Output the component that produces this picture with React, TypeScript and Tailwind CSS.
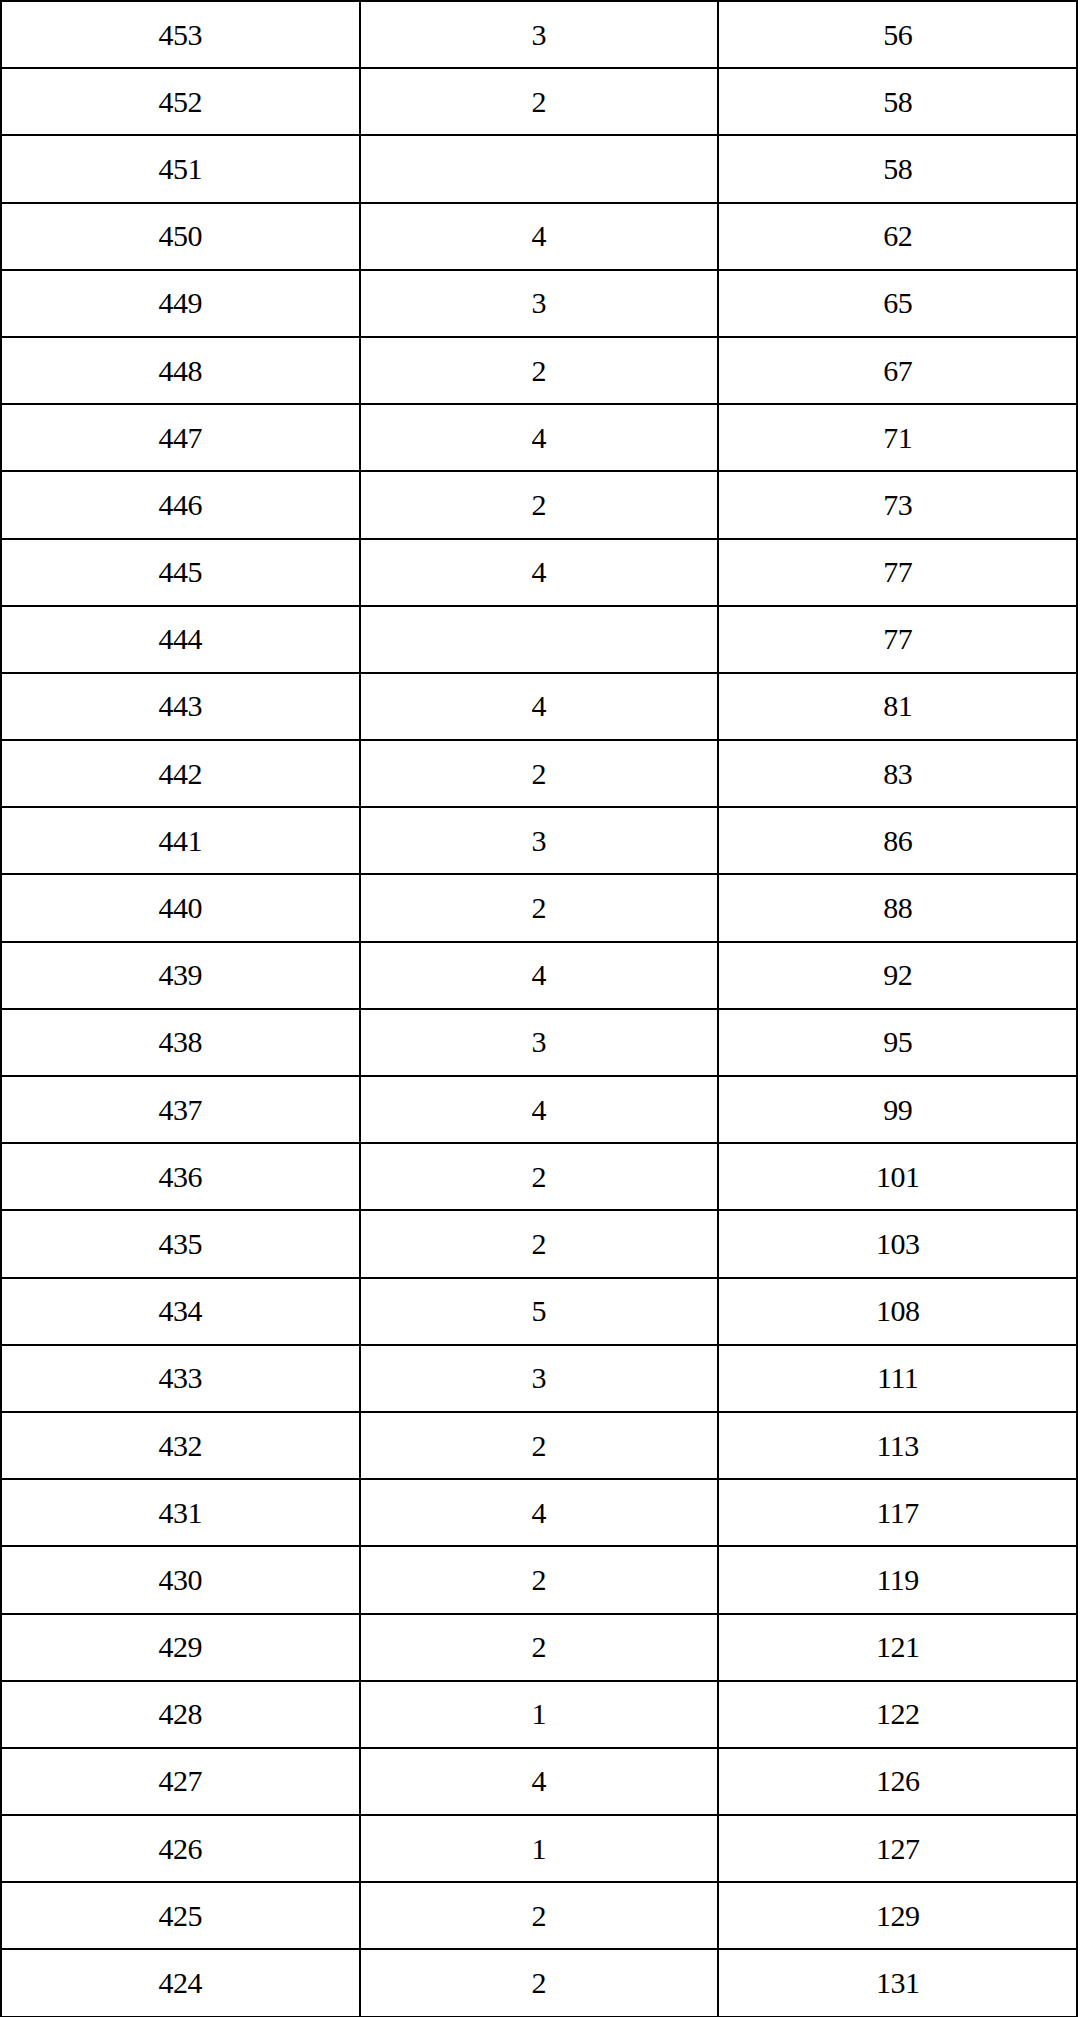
const rows: [number, number | null, number][] = [
  [453, 3, 56],
  [452, 2, 58],
  [451, null, 58],
  [450, 4, 62],
  [449, 3, 65],
  [448, 2, 67],
  [447, 4, 71],
  [446, 2, 73],
  [445, 4, 77],
  [444, null, 77],
  [443, 4, 81],
  [442, 2, 83],
  [441, 3, 86],
  [440, 2, 88],
  [439, 4, 92],
  [438, 3, 95],
  [437, 4, 99],
  [436, 2, 101],
  [435, 2, 103],
  [434, 5, 108],
  [433, 3, 111],
  [432, 2, 113],
  [431, 4, 117],
  [430, 2, 119],
  [429, 2, 121],
  [428, 1, 122],
  [427, 4, 126],
  [426, 1, 127],
  [425, 2, 129],
  [424, 2, 131],
];

export default function App() {
  return (
    <div className="min-h-[2017px] w-[1080px] bg-white">
      <table
        className="w-[1078px] table-fixed border-collapse text-[30px] leading-none text-black"
        style={{ fontFamily: '"Liberation Serif", "Noto Sans CJK SC", serif' }}
      >
        <tbody>
          {rows.map(([score, count, total]) => (
            <tr key={score} className="h-[67.2px]">
              <td className="border-2 border-black text-center align-middle tracking-[-0.5px]">{score}</td>
              <td className="border-2 border-black text-center align-middle">{count ?? ""}</td>
              <td className="border-2 border-black text-center align-middle tracking-[-0.5px]">{total}</td>
            </tr>
          ))}
        </tbody>
      </table>
    </div>
  );
}
